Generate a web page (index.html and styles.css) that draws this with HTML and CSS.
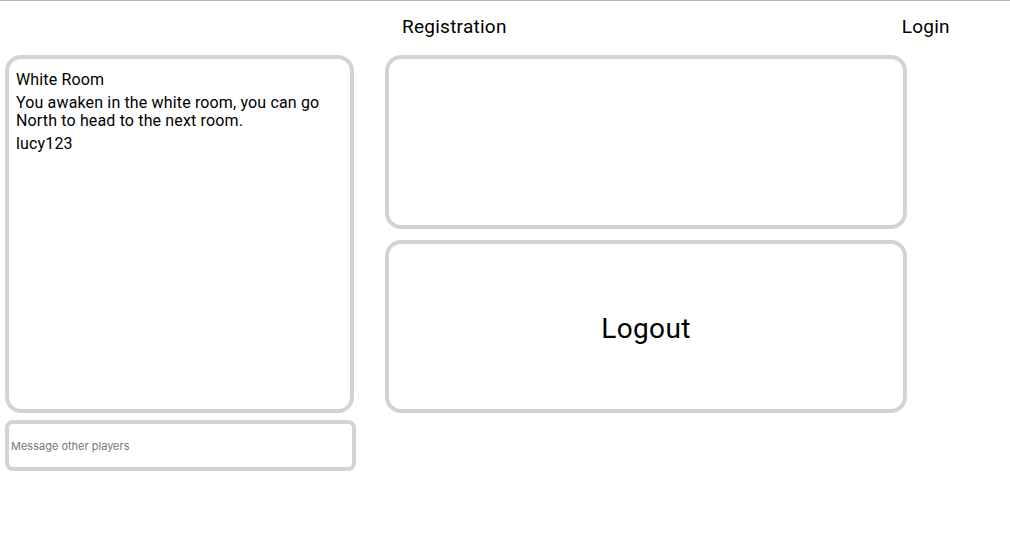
FILE: index.html
```html
<!DOCTYPE html>
<html>
<head>
<meta charset="utf-8">
<link rel="stylesheet" href="styles.css">
</head>
<body>
<div class="topline"></div>
<nav class="nav">
  <a class="nav-link reg">Registration</a>
  <a class="nav-link login">Login</a>
</nav>
<main class="main">
  <section class="left">
    <div class="panel room">
      <p class="line">White Room</p>
      <p class="line">You awaken in the white room, you can go North to head to the next room.</p>
      <p class="line">lucy123</p>
    </div>
    <input class="msg" type="text" placeholder="Message other players">
  </section>
  <section class="right">
    <div class="panel top"></div>
    <div class="panel logout">Logout</div>
  </section>
</main>
</body>
</html>
```
FILE: styles.css
```css
html, body {
  margin: 0;
  padding: 0;
  background: #fffffd;
  font-family: Roboto, "Liberation Sans", sans-serif;
  color: #000;
}
.topline {
  height: 1px;
  background: #b4b4b4;
}
.nav {
  height: 54px;
  display: flex;
  align-items: center;
  font-size: 19px;
  letter-spacing: 0.25px;
}
.nav-link {
  display: block;
  line-height: 20px;
  margin-top: -2px;
}
.reg { margin-left: 402px; }
.login { margin-left: 395px; }
.main {
  display: flex;
  padding-left: 5px;
  gap: 29px;
}
.left {
  width: 351px;
  display: flex;
  flex-direction: column;
  gap: 7px;
}
.panel {
  box-sizing: border-box;
  border: 4px solid #d3d3d3;
  border-radius: 16px;
  background: #fff;
}
.room {
  width: 349px;
  height: 358px;
  padding: 12px 7px 10px 7px;
  font-size: 16px;
  line-height: 18px;
  letter-spacing: 0.15px;
}
.line {
  margin: 0 0 5px 0;
}
.msg {
  box-sizing: border-box;
  width: 351px;
  height: 51px;
  border: 4px solid #d3d3d3;
  border-radius: 8px;
  background: #fff;
  padding: 0 2px;
  font-family: Inter, Roboto, "Liberation Sans", sans-serif;
  font-size: 11px;
  outline: none;
  margin: 0;
}
.msg::placeholder {
  color: #767676;
}
.right {
  width: 522px;
  display: flex;
  flex-direction: column;
  gap: 11px;
}
.top {
  height: 174px;
}
.logout {
  height: 173px;
  display: flex;
  align-items: center;
  justify-content: center;
  font-size: 28px;
  letter-spacing: 0.35px;
  padding-top: 4px;
}
```
